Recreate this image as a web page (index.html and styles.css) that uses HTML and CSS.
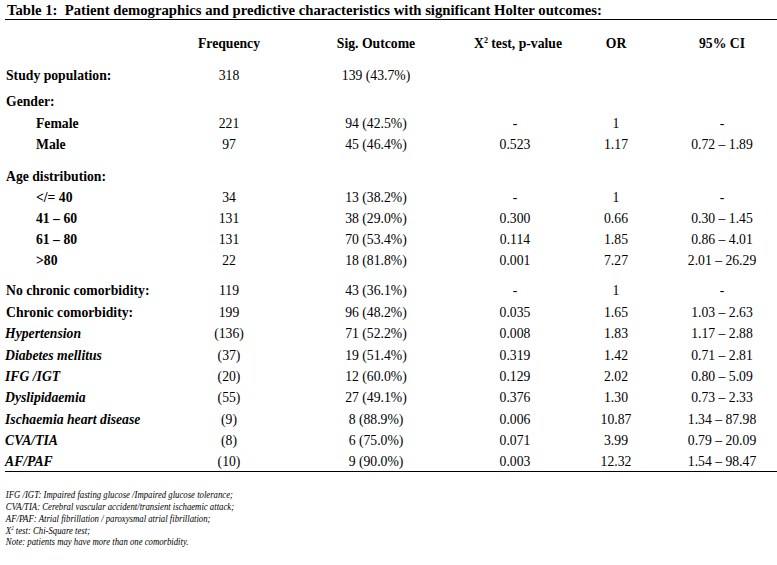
FILE: index.html
```html
<!DOCTYPE html>
<html>
<head>
<meta charset="utf-8">
<link rel="stylesheet" href="styles.css">
</head>
<body>
<div class="page">
  <div class="title">Table 1:&nbsp; Patient demographics and predictive characteristics with significant Holter outcomes:</div>
  <div class="table">
    <div class="row head">
      <div></div><div>Frequency</div><div>Sig. Outcome</div><div>X<sup>2</sup> test, p-value</div><div>OR</div><div>95% CI</div>
    </div>
    <div class="row grp-a">
      <div class="lbl">Study population:</div><div>318</div><div>139 (43.7%)</div><div></div><div></div><div></div>
    </div>
    <div class="row grp-b">
      <div class="lbl">Gender:</div><div></div><div></div><div></div><div></div><div></div>
    </div>
    <div class="row">
      <div class="lbl sub">Female</div><div>221</div><div>94 (42.5%)</div><div>-</div><div>1</div><div>-</div>
    </div>
    <div class="row">
      <div class="lbl sub">Male</div><div>97</div><div>45 (46.4%)</div><div>0.523</div><div>1.17</div><div>0.72 – 1.89</div>
    </div>
    <div class="row grp-c">
      <div class="lbl">Age distribution:</div><div></div><div></div><div></div><div></div><div></div>
    </div>
    <div class="row tight">
      <div class="lbl sub">&lt;/= 40</div><div>34</div><div>13 (38.2%)</div><div>-</div><div>1</div><div>-</div>
    </div>
    <div class="row tight">
      <div class="lbl sub">41 – 60</div><div>131</div><div>38 (29.0%)</div><div>0.300</div><div>0.66</div><div>0.30 – 1.45</div>
    </div>
    <div class="row tight">
      <div class="lbl sub">61 – 80</div><div>131</div><div>70 (53.4%)</div><div>0.114</div><div>1.85</div><div>0.86 – 4.01</div>
    </div>
    <div class="row tight">
      <div class="lbl sub">&gt;80</div><div>22</div><div>18 (81.8%)</div><div>0.001</div><div>7.27</div><div>2.01 – 26.29</div>
    </div>
    <div class="row grp-d">
      <div class="lbl">No chronic comorbidity:</div><div>119</div><div>43 (36.1%)</div><div>-</div><div>1</div><div>-</div>
    </div>
    <div class="row">
      <div class="lbl">Chronic comorbidity:</div><div>199</div><div>96 (48.2%)</div><div>0.035</div><div>1.65</div><div>1.03 – 2.63</div>
    </div>
    <div class="row">
      <div class="lbl it">Hypertension</div><div>(136)</div><div>71 (52.2%)</div><div>0.008</div><div>1.83</div><div>1.17 – 2.88</div>
    </div>
    <div class="row">
      <div class="lbl it">Diabetes mellitus</div><div>(37)</div><div>19 (51.4%)</div><div>0.319</div><div>1.42</div><div>0.71 – 2.81</div>
    </div>
    <div class="row">
      <div class="lbl it">IFG /IGT</div><div>(20)</div><div>12 (60.0%)</div><div>0.129</div><div>2.02</div><div>0.80 – 5.09</div>
    </div>
    <div class="row">
      <div class="lbl it">Dyslipidaemia</div><div>(55)</div><div>27 (49.1%)</div><div>0.376</div><div>1.30</div><div>0.73 – 2.33</div>
    </div>
    <div class="row">
      <div class="lbl it">Ischaemia heart disease</div><div>(9)</div><div>8 (88.9%)</div><div>0.006</div><div>10.87</div><div>1.34 – 87.98</div>
    </div>
    <div class="row">
      <div class="lbl it">CVA/TIA</div><div>(8)</div><div>6 (75.0%)</div><div>0.071</div><div>3.99</div><div>0.79 – 20.09</div>
    </div>
    <div class="row last">
      <div class="lbl it">AF/PAF</div><div>(10)</div><div>9 (90.0%)</div><div>0.003</div><div>12.32</div><div>1.54 – 98.47</div>
    </div>
  </div>
  <div class="notes">
    <div>IFG /IGT: Impaired fasting glucose /Impaired glucose tolerance;</div>
    <div>CVA/TIA: Cerebral vascular accident/transient ischaemic attack;</div>
    <div>AF/PAF: Atrial fibrillation / paroxysmal atrial fibrillation;</div>
    <div>X<sup>2</sup> test: Chi-Square test;</div>
    <div>Note: patients may have more than one comorbidity.</div>
  </div>
</div>
</body>
</html>
```
FILE: styles.css
```css
html, body {
  margin: 0;
  padding: 0;
  background: #fff;
}
body {
  font-family: "Liberation Serif", "Times New Roman", serif;
  color: #000;
}
.page {
  width: 777px;
  padding: 0 0 0 5px;
  box-sizing: border-box;
}
.title {
  font-weight: bold;
  font-size: 14.7px;
  line-height: 18px;
  padding-left: 2px;
  padding-top: 1px;
  border-bottom: 1px solid #000;
}
.table {
  font-size: 13.7px;
  padding-top: 13px;
  border-bottom: 1px solid #000;
}
.row {
  display: grid;
  grid-template-columns: 175px 98px 196px 82px 120px 92px 9px;
  height: 21.4px;
  line-height: 21.4px;
  align-items: center;
  text-align: center;
  white-space: nowrap;
}
.row.tight { height: 21px; line-height: 21px; }
.row.head {
  font-weight: bold;
}
.row.grp-a { margin-top: 11px; }
.row.grp-b { margin-top: 4.5px; }
.row.grp-c { margin-top: 10.5px; }
.row.grp-d { margin-top: 9px; }
.row.last { height: 20px; }
.lbl {
  text-align: left;
  font-weight: bold;
  padding-left: 1px;
}
.lbl.sub { padding-left: 31px; }
.lbl.it { font-style: italic; padding-left: 0; }
sup {
  font-size: 8px;
  line-height: 0;
  vertical-align: 5px;
}
.notes {
  font-style: italic;
  font-size: 10.5px;
  line-height: 11.7px;
  padding-top: 17px;
  padding-left: 1px;
  transform: scaleX(0.83);
  transform-origin: left top;
}
.notes sup {
  font-size: 6px;
  vertical-align: 4px;
}
```
